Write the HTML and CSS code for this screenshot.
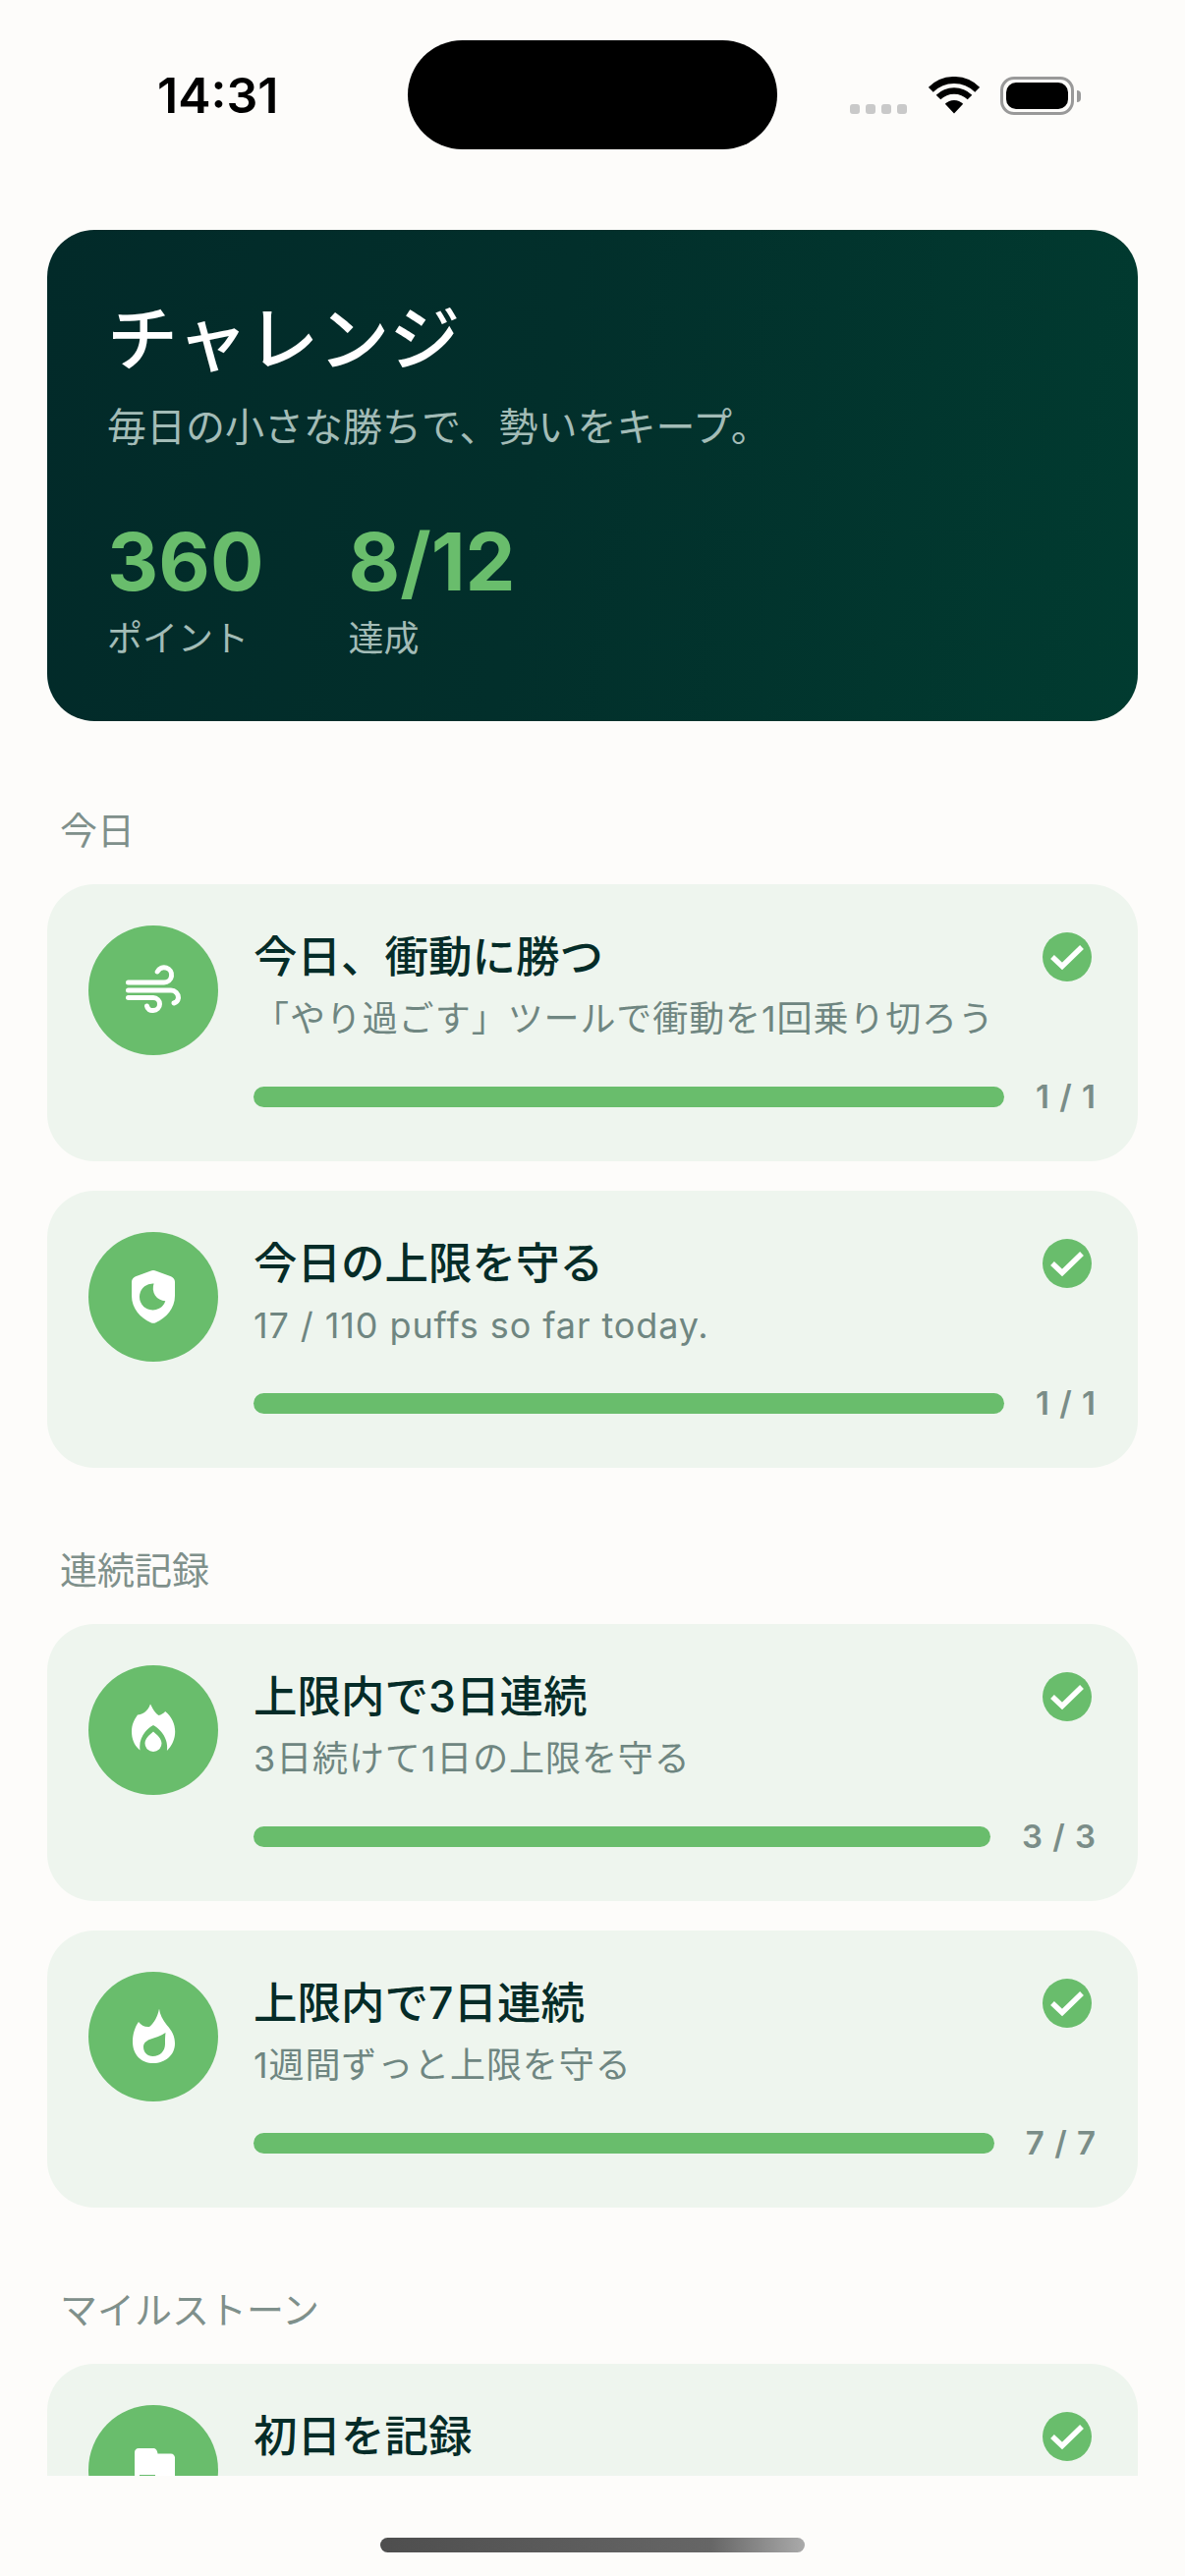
FILE: index.html
```html
<!DOCTYPE html>
<html lang="ja">
<head>
  <meta charset="UTF-8" />
  <title>チャレンジ</title>
  <meta name="viewport" content="width=device-width, initial-scale=1">
  <link rel="stylesheet" href="styles.css">
</head>
<body>
  <div class="screen">
    <div class="status">
      <span class="time">14:31</span>
      <div class="island"></div>
      <div class="status-icons">
        <div class="dots"><i></i><i></i><i></i><i></i></div>
        <svg class="wifi" viewBox="0 0 52 38">
          <path d="M2.3 13.3a33.5 33.5 0 0 1 47.4 0" fill="none" stroke="#000" stroke-width="7"/>
          <path d="M10 21a22.7 22.7 0 0 1 32 0" fill="none" stroke="#000" stroke-width="6.5"/>
          <path d="M26 37.5 16.8 27.8a13 13 0 0 1 18.4 0z" fill="#000"/>
        </svg>
        <div class="battery"><div class="battery-fill"></div></div>
        <div class="battery-cap"></div>
      </div>
    </div>

    <div class="content">
      <div class="hero">
        <h1>チャレンジ</h1>
        <p class="hero-sub">毎日の小さな勝ちで、勢いをキープ。</p>
        <div class="stats">
          <div class="stat">
            <div class="stat-value">360</div>
            <div class="stat-label">ポイント</div>
          </div>
          <div class="stat">
            <div class="stat-value">8/12</div>
            <div class="stat-label">達成</div>
          </div>
        </div>
      </div>

      <section class="group">
        <h2>今日</h2>
        <div class="card">
          <div class="badge">
            <svg viewBox="0 0 72 72" fill="none" stroke="#fff" stroke-width="5" stroke-linecap="round">
              <path d="M10.5 28H47a7.6 7.6 0 1 0-6.800-11"/>
              <path d="M10.500 36H54a7.500 7.500 0 0 1 7.500 7.500 6.500 6.500 0 0 1-4.500 5.500"/>
              <path d="M10.500 43.500H36a6.500 6.500 0 0 1 0 13 5.500 5.500 0 0 1-6.500-4.500"/>
            </svg>
          </div>
          <div class="card-body">
            <div class="card-head">
              <h3>今日、衝動に勝つ</h3>
              <svg class="check" viewBox="0 0 50 50"><circle cx="25" cy="25" r="25" fill="#69bd6c"/><path d="M10 25 20 34.500 40 15" fill="none" stroke="#fff" stroke-width="5.500"/></svg>
            </div>
            <p class="card-sub">「やり過ごす」ツールで衝動を1回乗り切ろう</p>
            <div class="progress">
              <div class="bar"></div>
              <span class="count">1 / 1</span>
            </div>
          </div>
        </div>
        <div class="card">
          <div class="badge">
            <svg viewBox="0 0 72 72">
              <path fill="#fff" fill-rule="evenodd" d="M36 9c1 0 2 .3 3 .7l15 5.600c2.400.9 4 3 4 5.500v14.200c0 13-9 22.500-19.500 27.200-1.600.7-3.400.7-5 0C23 57.500 14 48 14 35V20.800c0-2.500 1.600-4.600 4-5.500L33 9.700c1-.4 2-.7 3-.7zM36.600 22.500A13.500 13.500 0 1 0 48.300 40.200 13 13 0 0 1 36.600 22.500z"/>
            </svg>
          </div>
          <div class="card-body">
            <div class="card-head">
              <h3>今日の上限を守る</h3>
              <svg class="check" viewBox="0 0 50 50"><circle cx="25" cy="25" r="25" fill="#69bd6c"/><path d="M10 25 20 34.500 40 15" fill="none" stroke="#fff" stroke-width="5.500"/></svg>
            </div>
            <p class="card-sub">17 / 110 puffs so far today.</p>
            <div class="progress">
              <div class="bar"></div>
              <span class="count">1 / 1</span>
            </div>
          </div>
        </div>
      </section>

      <section class="group">
        <h2>連続記録</h2>
        <div class="card">
          <div class="badge">
            <svg viewBox="0 0 72 72">
              <path fill="#fff" d="M33 9.500c2 3.500 3.500 8 8.500 11.500 2.500-.5 4.800-2 6.700-4 6.500 5 10 13 10 20.500 0 8-3.300 14.500-8.300 19.500 1-8-1.500-14-6-19.500-2.500-3-5-5-7.900-6.500-3 1.500-5.500 3.500-8 6.500-4.500 5.500-6.500 11.500-5.500 19-5.500-4.500-8.500-11-8.500-19 0-7 2.500-12 6-17 4.500-.5 10-2.500 13-11z"/>
              <path fill="#fff" d="M36 37.500c3.500 3 8.500 7 8.500 12a8.500 8.500 0 0 1-17 0c0-5 5-9 8.500-12z"/>
            </svg>
          </div>
          <div class="card-body">
            <div class="card-head">
              <h3>上限内で3日連続</h3>
              <svg class="check" viewBox="0 0 50 50"><circle cx="25" cy="25" r="25" fill="#69bd6c"/><path d="M10 25 20 34.500 40 15" fill="none" stroke="#fff" stroke-width="5.500"/></svg>
            </div>
            <p class="card-sub">3日続けて1日の上限を守る</p>
            <div class="progress">
              <div class="bar"></div>
              <span class="count">3 / 3</span>
            </div>
          </div>
        </div>
        <div class="card">
          <div class="badge">
            <svg viewBox="0 0 72 72">
              <path fill="#fff" fill-rule="evenodd" d="M42 7.500c.5 6 3.500 11 8 17 5 5.500 8 11 8 18.500 0 12-10 20-22 20S15 55 15 41c0-8 2.500-15 6-20 2.500 3.500 6.500 5.500 11 5 5-4 8.500-10.500 10-18.500zM48.500 32c-5 3.500-10.500 5-15 6.500-4.500 1.500-7.500 4-7.500 8 0 5.500 4 9.500 9.500 9.500 7.500 0 12.500-5.500 12.500-12.500 0-4.500 0-8 .5-11.500z"/>
            </svg>
          </div>
          <div class="card-body">
            <div class="card-head">
              <h3>上限内で7日連続</h3>
              <svg class="check" viewBox="0 0 50 50"><circle cx="25" cy="25" r="25" fill="#69bd6c"/><path d="M10 25 20 34.500 40 15" fill="none" stroke="#fff" stroke-width="5.500"/></svg>
            </div>
            <p class="card-sub">1週間ずっと上限を守る</p>
            <div class="progress">
              <div class="bar"></div>
              <span class="count">7 / 7</span>
            </div>
          </div>
        </div>
      </section>

      <section class="group">
        <h2>マイルストーン</h2>
        <div class="card">
          <div class="badge">
            <svg viewBox="0 0 72 72">
              <path fill="#fff" fill-rule="evenodd" d="M17 18c0-2.200 1.800-4 4-4h15c2.200 0 4 1.500 4.500 5.500H54c2.200 0 4 1.800 4 4V54c0 2.200-1.800 4-4 4H21c-2.200 0-4-1.800-4-4zM22 41v1.500h16V41z"/>
            </svg>
          </div>
          <div class="card-body">
            <div class="card-head">
              <h3>初日を記録</h3>
              <svg class="check" viewBox="0 0 50 50"><circle cx="25" cy="25" r="25" fill="#69bd6c"/><path d="M10 25 20 34.500 40 15" fill="none" stroke="#fff" stroke-width="5.500"/></svg>
            </div>
          </div>
        </div>
      </section>
    </div>

    <div class="home-area">
      <div class="home-bar"></div>
    </div>
  </div>
</body>
</html>
```

FILE: styles.css
```css
body { margin: 0; background: #fdfcfa; font-family: Inter, "Noto Sans CJK JP", sans-serif; }
h1, h2, h3, p { margin: 0; font-weight: normal; }

.screen { width: 1206px; height: 2622px; display: flex; flex-direction: column; overflow: hidden; }

/* status bar */
.status { height: 234px; flex: none; display: grid; grid-template-columns: 415px 376px 1fr; align-items: start; }
.time { padding: 67px 0 0 160px; font-size: 50px; line-height: 60px; font-weight: 600; color: #000; }
.island { height: 111px; margin-top: 41px; background: #000; border-radius: 56px; }
.status-icons { display: flex; align-items: flex-start; padding: 78px 0 0 74px; }
.dots { display: flex; gap: 6px; margin-top: 28px; }
.dots i { width: 10px; height: 10px; border-radius: 3px; background: #c9c9c9; }
.wifi { width: 52px; height: 38px; margin-left: 22px; }
.battery { width: 75px; height: 39px; box-sizing: border-box; margin-left: 21px; padding: 3px; border: 3px solid #999; border-radius: 14px; }
.battery-fill { height: 100%; background: #000; border-radius: 10px; }
.battery-cap { width: 4px; height: 12px; margin: 14px 0 0 3px; background: #999; border-radius: 0 6px 6px 0; }

/* scrolling content */
.content { height: 2286px; flex: none; overflow: hidden; padding: 0 48px; }

.hero { height: 500px; box-sizing: border-box; margin-bottom: 7px; padding: 66px 61px 0; border-radius: 48px; background: linear-gradient(100deg, #022a29 0%, #022f2b 45%, #013b30 100%); }
.hero h1 { font-size: 72px; line-height: 90px; font-weight: 500; color: #fff; }
.hero-sub { margin-top: 20px; font-size: 40px; line-height: 50px; color: #a3bcb7; }
.stats { display: flex; gap: 86px; margin-top: 67px; }
.stat-value { font-size: 81px; line-height: 90px; font-weight: 700; color: #69bd6c; }
.stat-label { margin-top: 10px; font-size: 36px; line-height: 46px; color: #a3bcb7; }

.group { padding-top: 80px; }
.group h2 { margin: 0 0 31px 13px; font-size: 38px; line-height: 48px; color: #7f908b; }

.card { display: flex; gap: 36px; padding: 42px 42px 0 42px; height: 282px; box-sizing: border-box; border-radius: 48px; background: #eef5ee; }
.card + .card { margin-top: 30px; }
.badge { width: 132px; height: 132px; flex: none; display: flex; align-items: center; justify-content: center; border-radius: 50%; background: #69bd6c; }
.badge svg { width: 72px; height: 72px; }
.card-body { flex: 1; min-width: 0; padding-top: 7px; }
.card-head { display: flex; justify-content: space-between; align-items: center; height: 50px; padding-right: 5px; }
.card-head h3 { font-size: 44.5px; line-height: 50px; font-weight: 500; color: #052c28; }
.check { width: 50px; height: 50px; flex: none; }
.card-sub { margin-top: 13px; font-size: 36px; line-height: 50px; letter-spacing: 0.9px; color: #6f8681; }
.progress { display: flex; align-items: center; gap: 32px; margin-top: 44px; }
.bar { flex: 1; height: 21px; border-radius: 11px; background: #69bd6c; }
.count { font-size: 33px; line-height: 21px; font-weight: 600; letter-spacing: 1px; color: #7a8d88; white-space: nowrap; }

/* home indicator */
.home-area { flex: 1; display: flex; justify-content: center; padding-top: 63px; }
.home-bar { width: 432px; height: 15px; border-radius: 8px; background: linear-gradient(90deg, #4e4e4e 0%, #666 78%, #aaa 100%); }
```
